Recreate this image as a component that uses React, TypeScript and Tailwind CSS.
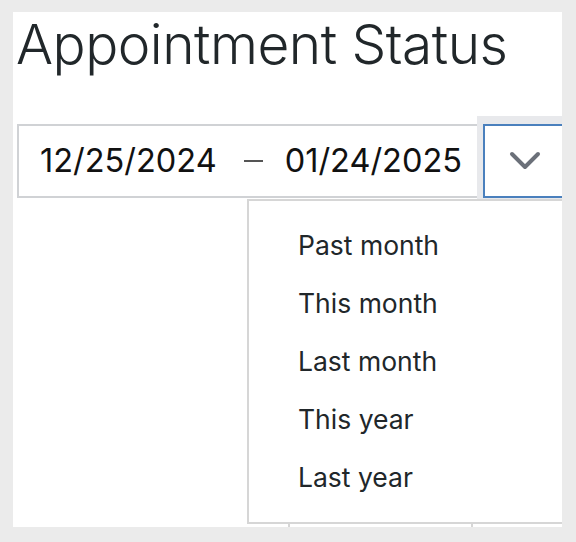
const OPTIONS = ["Past month", "This month", "Last month", "This year", "Last year"];

export default function App() {
  return (
    <div className="min-h-[542px] w-[576px] bg-[#ebebeb] pt-[12px] pl-[13px]" style={{ fontFamily: "Inter, 'Noto Sans', sans-serif" }}>
      <div className="relative h-[515px] w-[549px] overflow-hidden bg-white">
        <h1 className="pl-[3px] text-[55px] leading-[64px] font-light tracking-[-0.5px] text-[#21272a] whitespace-nowrap">
          Appointment Status
        </h1>

        {/* date range picker */}
        <div className="mt-[48px] ml-[4px] flex h-[74px] w-[600px]">
          <div className="flex w-[460px] items-center border-2 border-r-0 border-[#d0d2d5] pl-[21px] text-[32.5px] text-[#111]">
            <span>12/25/2024</span>
            <span className="mr-[22px] ml-[27px] h-[2px] w-[19px] bg-[#555]" />
            <span>01/24/2025</span>
          </div>
          <div className="-mt-[8px] h-[84px] bg-[#e8e9ec] pt-[8px] pl-[6px]">
            <button className="flex h-[74px] w-[104px] items-center justify-center border-2 border-[#4a80bd] bg-white pr-[20px]">
              <svg width="32" height="20" viewBox="0 0 32 20" fill="none">
                <polyline points="3,3 16,16 29,3" stroke="#6b7079" strokeWidth="4" strokeLinecap="round" strokeLinejoin="round" />
              </svg>
            </button>
          </div>
        </div>

        {/* chart underneath, mostly covered by the menu */}
        <div className="ml-[234px] flex flex-col">
          <div className="mt-[47px] h-[1px] w-[4px] bg-[#d6d6d6]" />
          <div className="mt-[99px] h-[1px] w-[4px] bg-[#d6d6d6]" />
          <div className="mt-[145px] h-[1px] w-[4px] bg-[#d6d6d6]" />
          <div className="mt-[29px] flex pl-[41px] gap-[181px]">
            <div className="h-[6px] w-[2px] bg-[#d6d6d6]" />
            <div className="h-[6px] w-[2px] bg-[#d6d6d6]" />
          </div>
        </div>

        {/* dropdown menu */}
        <div className="absolute left-[234px] top-[187px] h-[325px] w-[340px] border-2 border-[#d6d6d6] bg-white pt-[16px]">
          {OPTIONS.map((o) => (
            <div key={o} className="flex h-[58px] items-center pl-[49px] text-[26.5px] text-[#21272a]">
              {o}
            </div>
          ))}
        </div>
      </div>
    </div>
  );
}
